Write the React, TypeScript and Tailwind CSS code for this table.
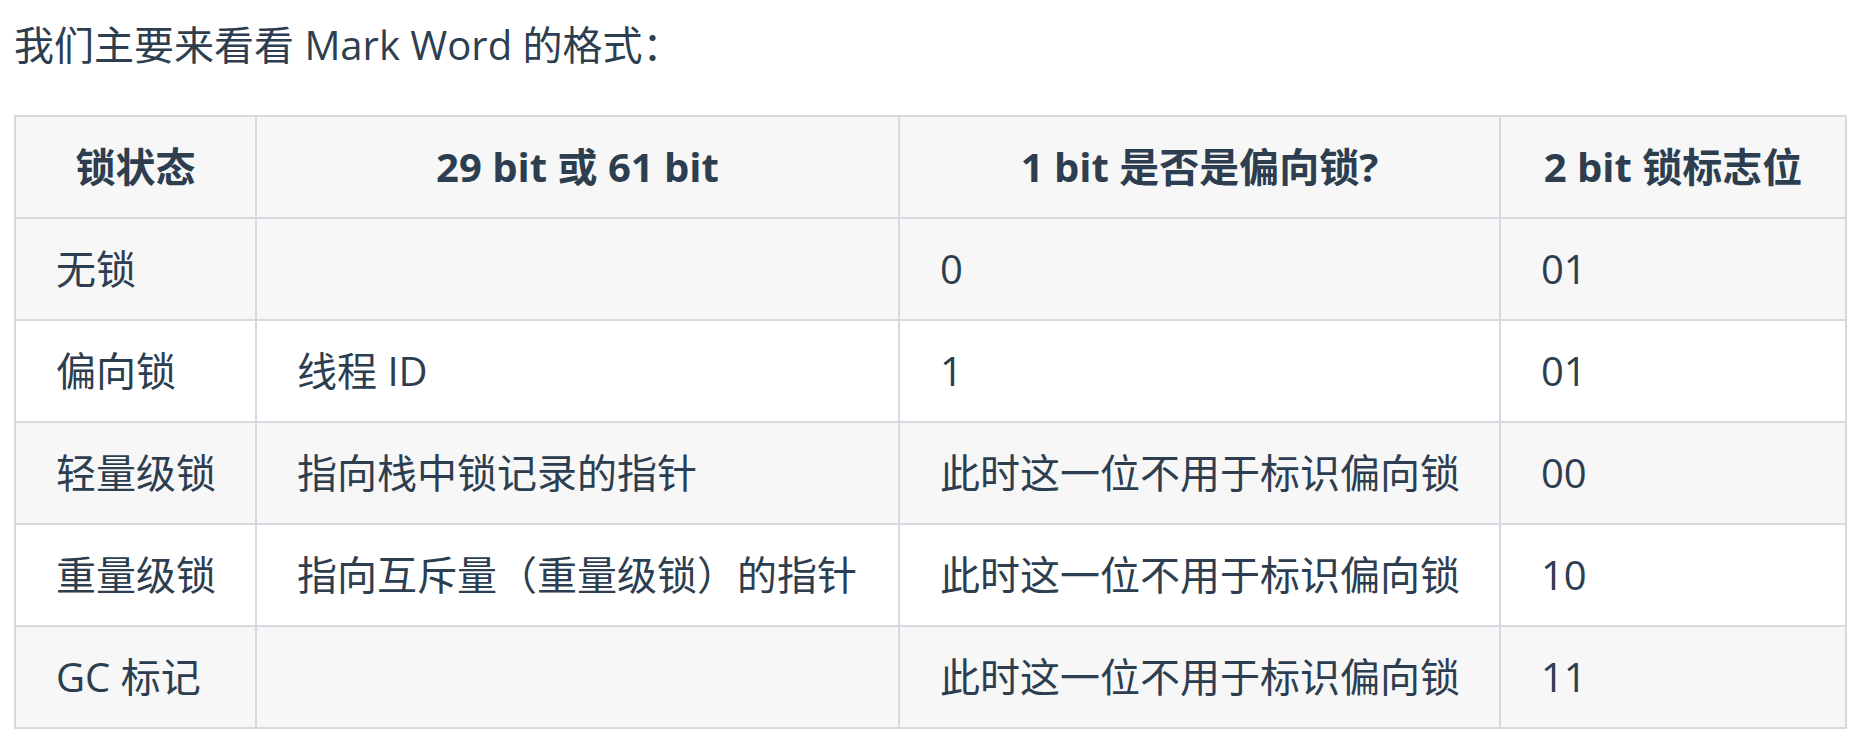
const rows = [
  { state: '无锁', ptr: '', biased: '0', flag: '01' },
  { state: '偏向锁', ptr: '线程 ID', biased: '1', flag: '01' },
  { state: '轻量级锁', ptr: '指向栈中锁记录的指针', biased: '此时这一位不用于标识偏向锁', flag: '00' },
  { state: '重量级锁', ptr: '指向互斥量（重量级锁）的指针', biased: '此时这一位不用于标识偏向锁', flag: '10' },
  { state: 'GC 标记', ptr: '', biased: '此时这一位不用于标识偏向锁', flag: '11' },
];

export default function App() {
  return (
    <div
      className="min-h-screen bg-white px-[14px] pt-[11px] text-[#2c3e50] text-[40px]"
      style={{ fontFamily: '"Open Sans", "Noto Sans CJK SC", sans-serif' }}
    >
      <p className="leading-[68px]">我们主要来看看 Mark Word 的格式：</p>

      <table className="mt-[36px] w-[1831px] table-fixed border-collapse leading-[52px]">
        <colgroup>
          <col className="w-[241px]" />
          <col className="w-[643px]" />
          <col className="w-[601px]" />
          <col className="w-[346px]" />
        </colgroup>
        <thead>
          <tr className="bg-[#f7f7f7]">
            <th className="border-2 border-[#d6dae0] px-[40px] py-[24px] text-center font-bold">锁状态</th>
            <th className="border-2 border-[#d6dae0] px-[40px] py-[24px] text-center font-bold">29 bit 或 61 bit</th>
            <th className="border-2 border-[#d6dae0] px-[40px] py-[24px] text-center font-bold">1 bit 是否是偏向锁?</th>
            <th className="border-2 border-[#d6dae0] px-[40px] py-[24px] text-center font-bold whitespace-nowrap">2 bit 锁标志位</th>
          </tr>
        </thead>
        <tbody>
          {rows.map((row, i) => (
            <tr key={i} className={i % 2 === 0 ? 'bg-[#f7f7f7]' : 'bg-white'}>
              <td className="border-2 border-[#d6dae0] px-[40px] py-[24px] whitespace-nowrap">{row.state}</td>
              <td className="border-2 border-[#d6dae0] px-[40px] py-[24px] whitespace-nowrap">{row.ptr}</td>
              <td className="border-2 border-[#d6dae0] px-[40px] py-[24px] whitespace-nowrap">{row.biased}</td>
              <td className="border-2 border-[#d6dae0] px-[40px] py-[24px] whitespace-nowrap">{row.flag}</td>
            </tr>
          ))}
        </tbody>
      </table>
    </div>
  );
}
